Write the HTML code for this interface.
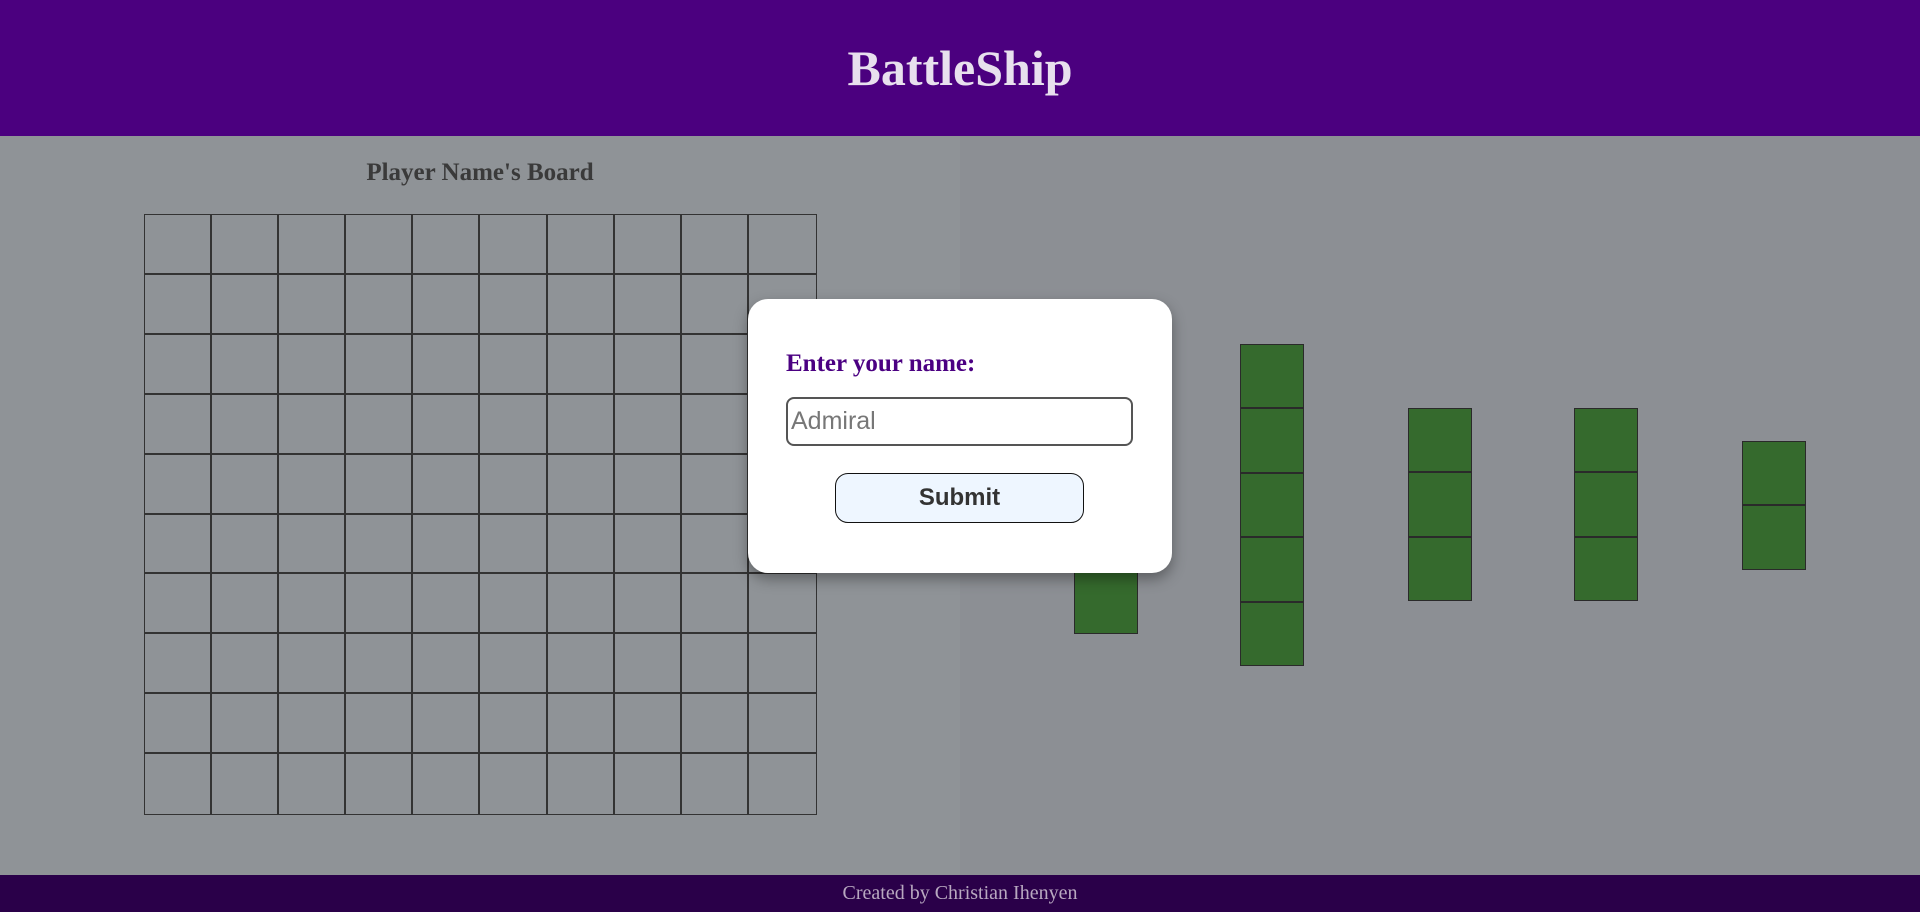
<!DOCTYPE html>
<html><head><meta charset="utf-8"><style>
*{margin:0;padding:0;box-sizing:border-box}
body{width:1920px;height:912px;overflow:hidden;position:relative;background:#8c8f94;font-family:"Liberation Serif",serif}
.hdr{position:absolute;left:0;top:0;width:1920px;height:136px;background:#4b007f;color:#e8e0ee;text-align:center;font-weight:bold;font-size:50px;line-height:136px}
.left{position:absolute;left:0;top:136px;width:960px;height:739px;background:#8f9397}
.bt{position:absolute;left:0;width:960px;top:159px;text-align:center;font-weight:bold;font-size:25px;color:#3a3a3a}
.grid{position:absolute;left:144px;top:214px;width:673px;height:601px;display:grid;grid-template-columns:repeat(10,1fr);grid-template-rows:repeat(10,1fr);border:1px solid #333}
.grid div{border-right:2px solid #333;border-bottom:2px solid #333}
.grid div:nth-child(10n){border-right:none}
.grid div:nth-child(n+91){border-bottom:none}
.ship{position:absolute;width:64px}
.ship div{height:64.4px;background:#356a2d;border:1px solid #2a2a2a}
.ftr{position:absolute;left:0;top:875px;width:1920px;height:37px;background:#2a0049;color:#b8a8c0;text-align:center;font-size:20px;line-height:37px}
.modal{position:absolute;left:748px;top:299px;width:424px;height:274px;background:#fff;border-radius:20px;box-shadow:0 6px 14px rgba(0,0,0,.35)}
.lbl{position:absolute;left:38px;top:51px;font-weight:bold;font-size:25px;color:#4b0082}
.inp{position:absolute;left:38px;top:98px;width:347px;height:49px;border:2px solid #555;border-radius:8px;font-family:"Liberation Sans",sans-serif;font-size:25px;color:#777;padding-left:3px;line-height:44px}
.btn{position:absolute;left:87px;top:174px;width:249px;height:50px;border:1px solid #111;border-radius:13px;background:#eef6ff;text-align:center;font-family:"Liberation Sans",sans-serif;font-weight:bold;font-size:24px;color:#333;line-height:48px}
</style></head><body>
<div class="hdr">BattleShip</div>
<div class="left"></div>
<div class="bt">Player Name's Board</div>
<div class="grid">
<div></div><div></div><div></div><div></div><div></div><div></div><div></div><div></div><div></div><div></div>
<div></div><div></div><div></div><div></div><div></div><div></div><div></div><div></div><div></div><div></div>
<div></div><div></div><div></div><div></div><div></div><div></div><div></div><div></div><div></div><div></div>
<div></div><div></div><div></div><div></div><div></div><div></div><div></div><div></div><div></div><div></div>
<div></div><div></div><div></div><div></div><div></div><div></div><div></div><div></div><div></div><div></div>
<div></div><div></div><div></div><div></div><div></div><div></div><div></div><div></div><div></div><div></div>
<div></div><div></div><div></div><div></div><div></div><div></div><div></div><div></div><div></div><div></div>
<div></div><div></div><div></div><div></div><div></div><div></div><div></div><div></div><div></div><div></div>
<div></div><div></div><div></div><div></div><div></div><div></div><div></div><div></div><div></div><div></div>
<div></div><div></div><div></div><div></div><div></div><div></div><div></div><div></div><div></div><div></div>
</div>
<div class="ship" style="left:1074px;top:376px"><div></div><div></div><div></div><div></div></div>
<div class="ship" style="left:1240px;top:344px"><div></div><div></div><div></div><div></div><div></div></div>
<div class="ship" style="left:1408px;top:408px"><div></div><div></div><div></div></div>
<div class="ship" style="left:1574px;top:408px"><div></div><div></div><div></div></div>
<div class="ship" style="left:1742px;top:441px"><div></div><div></div></div>
<div class="modal">
<div class="lbl">Enter your name:</div>
<div class="inp">Admiral</div>
<div class="btn">Submit</div>
</div>
<div class="ftr">Created by Christian Ihenyen</div>
</body></html>
